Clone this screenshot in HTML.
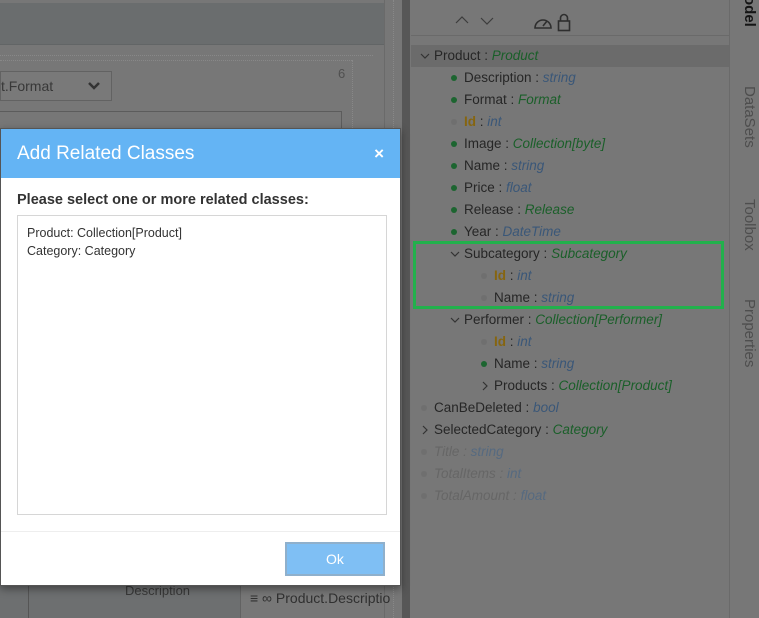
<!DOCTYPE html>
<html><head><meta charset="utf-8"><style>
*{margin:0;padding:0;box-sizing:border-box}
body{width:759px;height:618px;overflow:hidden;background:#777;font-family:"Liberation Sans","DejaVu Sans",sans-serif;position:relative}
.abs{position:absolute}
.row{position:absolute;height:22px;line-height:22px;font-size:13.5px;color:#262626;white-space:nowrap}
.g{color:#1a5f29;font-style:italic}
.b{color:#3a5778;font-style:italic}
.o{color:#86650f;font-weight:bold}
.dot{position:absolute;width:6px;height:6px;border-radius:3px;top:8px}
.dg{background:#1c6530}.dn{background:#6f6f6f}
.chev{position:absolute;top:7px}
.faint{color:#666;font-style:italic}
.tab{position:absolute;transform:rotate(90deg);transform-origin:left top;font-size:15px;color:#4e4e4e;white-space:nowrap}
</style></head><body>
<div class="abs" style="left:0;top:3px;width:384px;height:42px;background:#6a6d6e;border-bottom:1px solid #626566"></div>
<div class="abs" style="left:384px;top:0;width:1px;height:618px;background:#6a6a6a"></div>
<div class="abs" style="left:393px;top:0;width:0;height:618px;border-left:1px dotted #888"></div>
<div class="abs" style="left:0;top:55px;width:373px;height:1px;border-top:1px dotted #888"></div>
<div class="abs" style="left:0;top:60px;width:352px;height:1px;border-top:1px dotted #888"></div>
<div class="abs" style="left:352px;top:60px;width:1px;height:80px;border-left:1px dotted #888"></div>
<div class="abs" style="left:0;top:71px;width:112px;height:30px;border:1px solid #626262;background:#797979;font-size:14px;line-height:28px;color:#383838">t.Format<svg style="position:absolute;left:86px;top:9px" width="14" height="10"><path d="M2 2 L7 7 L12 2" fill="none" stroke="#333" stroke-width="2.5"/></svg></div>
<div class="abs" style="left:338px;top:66px;font-size:13px;color:#505050">6</div>
<div class="abs" style="left:0;top:111px;width:342px;height:30px;border-top:1px solid #5c5c5c;border-right:1px solid #5c5c5c"></div>
<div class="abs" style="left:0;top:586px;width:240px;height:32px;background:#6d6f70"></div>
<div class="abs" style="left:28px;top:586px;width:1px;height:32px;background:#555"></div>
<div class="abs" style="left:125px;top:583px;font-size:13px;color:#383838">Description</div>
<div class="abs" style="left:240px;top:586px;width:1px;height:32px;background:#626262"></div>
<div class="abs" style="left:250px;top:590px;font-size:14px;color:#303030">&#8801; &#8734; Product.Descriptio</div>
<div class="abs" style="left:402px;top:0;width:8px;height:618px;background:#575757"></div>
<div class="abs" style="left:410px;top:0;width:319px;height:618px;background:#777"></div>
<div class="abs" style="left:411px;top:35px;width:318px;height:1px;background:#6a6a6a"></div>
<svg class="abs" style="left:454px;top:14px" width="45" height="12"><path d="M2 9 L8 3 L14 9" fill="none" stroke="#3c3c3c" stroke-width="1.2"/><path d="M27 4 L33 10 L39 4" fill="none" stroke="#3c3c3c" stroke-width="1.2"/></svg>
<svg class="abs" style="left:533px;top:12px" width="40" height="20" viewBox="0 0 40 20"><path d="M2 16 A8 8 0 1 1 18 16 Z" fill="none" stroke="#2e2e2e" stroke-width="1.6"/><path d="M10 14 L14 9" stroke="#2e2e2e" stroke-width="1.6"/><rect x="25.5" y="9" width="11" height="9.5" fill="none" stroke="#2e2e2e" stroke-width="1.6"/><path d="M27.5 9 V6 A3.5 3.5 0 0 1 34.5 6 V9" fill="none" stroke="#2e2e2e" stroke-width="1.6"/></svg>
<div class="abs" style="left:411px;top:45px;width:318px;height:22px;background:#6b6b6b"></div>
<div class="abs" style="left:729px;top:0;width:1px;height:618px;background:#6a6a6a"></div>
<div class="tab" style="left:758px;top:-4px;color:#151515;font-weight:bold">odel</div>
<div class="tab" style="left:758px;top:86px">DataSets</div>
<div class="tab" style="left:758px;top:199px">Toolbox</div>
<div class="tab" style="left:758px;top:299px">Properties</div>

<div class="row" style="left:434px;top:45px"><svg class="chev" style="left:-14px" width="10" height="8"><path d="M1 2 L5 6 L9 2" fill="none" stroke="#333" stroke-width="1.2"/></svg>Product : <span class="g">Product</span></div>
<div class="row" style="left:464px;top:67px"><i class="dot dg" style="left:-13px"></i>Description : <span class="b">string</span></div>
<div class="row" style="left:464px;top:89px"><i class="dot dg" style="left:-13px"></i>Format : <span class="g">Format</span></div>
<div class="row" style="left:464px;top:111px"><i class="dot dn" style="left:-13px"></i><span class="o">Id</span> : <span class="b">int</span></div>
<div class="row" style="left:464px;top:133px"><i class="dot dg" style="left:-13px"></i>Image : <span class="g">Collection[byte]</span></div>
<div class="row" style="left:464px;top:155px"><i class="dot dg" style="left:-13px"></i>Name : <span class="b">string</span></div>
<div class="row" style="left:464px;top:177px"><i class="dot dg" style="left:-13px"></i>Price : <span class="b">float</span></div>
<div class="row" style="left:464px;top:199px"><i class="dot dg" style="left:-13px"></i>Release : <span class="g">Release</span></div>
<div class="row" style="left:464px;top:221px"><i class="dot dg" style="left:-13px"></i>Year : <span class="b">DateTime</span></div>
<div class="row" style="left:464px;top:243px"><svg class="chev" style="left:-14px" width="10" height="8"><path d="M1 2 L5 6 L9 2" fill="none" stroke="#333" stroke-width="1.2"/></svg>Subcategory : <span class="g">Subcategory</span></div>
<div class="row" style="left:494px;top:265px"><i class="dot dn" style="left:-13px"></i><span class="o">Id</span> : <span class="b">int</span></div>
<div class="row" style="left:494px;top:287px"><i class="dot dn" style="left:-13px"></i>Name : <span class="b">string</span></div>
<div class="abs" style="left:413px;top:241px;width:311px;height:68px;border:3px solid #22b14c"></div>
<div class="row" style="left:464px;top:309px"><svg class="chev" style="left:-14px" width="10" height="8"><path d="M1 2 L5 6 L9 2" fill="none" stroke="#333" stroke-width="1.2"/></svg>Performer : <span class="g">Collection[Performer]</span></div>
<div class="row" style="left:494px;top:331px"><i class="dot dn" style="left:-13px"></i><span class="o">Id</span> : <span class="b">int</span></div>
<div class="row" style="left:494px;top:353px"><i class="dot dg" style="left:-13px"></i>Name : <span class="b">string</span></div>
<div class="row" style="left:494px;top:375px"><svg class="chev" style="left:-13px;top:6px" width="8" height="10"><path d="M2 1 L6 5 L2 9" fill="none" stroke="#333" stroke-width="1.2"/></svg>Products : <span class="g">Collection[Product]</span></div>
<div class="row" style="left:434px;top:397px"><i class="dot dn" style="left:-13px"></i>CanBeDeleted : <span class="b">bool</span></div>
<div class="row" style="left:434px;top:419px"><svg class="chev" style="left:-13px;top:6px" width="8" height="10"><path d="M2 1 L6 5 L2 9" fill="none" stroke="#333" stroke-width="1.2"/></svg>SelectedCategory : <span class="g">Category</span></div>
<div class="row" style="left:434px;top:441px"><i class="dot dn" style="left:-13px"></i><span class="faint">Title : </span><span class="b" style="color:#566a80">string</span></div>
<div class="row" style="left:434px;top:463px"><i class="dot dn" style="left:-13px"></i><span class="faint">TotalItems : </span><span class="b" style="color:#566a80">int</span></div>
<div class="row" style="left:434px;top:485px"><i class="dot dn" style="left:-13px"></i><span class="faint">TotalAmount : </span><span class="b" style="color:#566a80">float</span></div>

<div class="abs" style="left:0;top:128px;width:401px;height:458px;background:#fff;border:1px solid #555;box-shadow:0 3px 8px rgba(0,0,0,.4)">
  <div style="height:49px;background:#64b4f4;color:#fff;font-size:19px;line-height:49px;padding-left:16px">Add Related Classes<span style="position:absolute;right:16px;top:0;font-size:17px;font-weight:bold">&#215;</span></div>
  <div style="position:absolute;left:16px;top:63px;font-size:14.5px;font-weight:bold;color:#333">Please select one or more related classes:</div>
  <div style="position:absolute;left:16px;top:86px;width:370px;height:300px;border:1px solid #d6d6d6;padding:8px 9px;font-size:12.5px;line-height:18px;color:#333">Product: Collection[Product]<br>Category: Category</div>
  <div style="position:absolute;left:0;top:402px;width:399px;height:1px;background:#eee"></div>
  <div style="position:absolute;left:284px;top:413px;width:100px;height:34px;background:#7fbff4;border:2px solid #8fb0cc;color:#fff;font-size:14px;text-align:center;line-height:30px">Ok</div>
</div>
</body></html>
